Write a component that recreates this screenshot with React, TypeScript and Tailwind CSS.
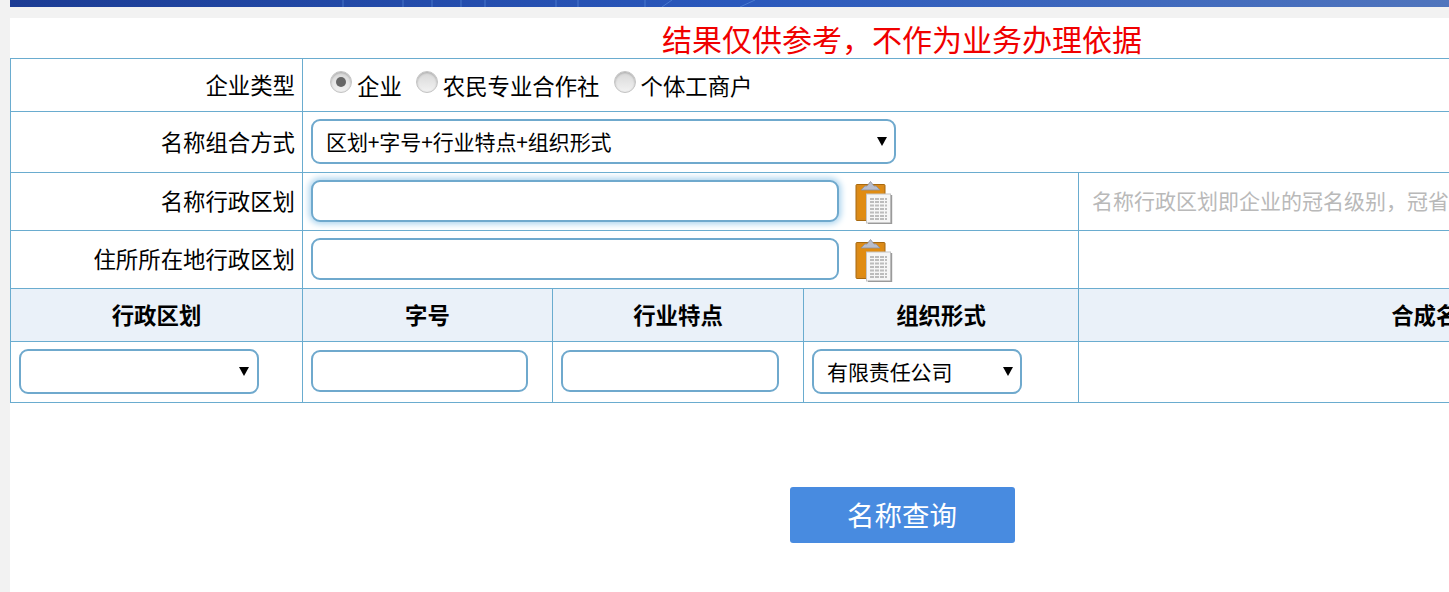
import type { ReactNode } from 'react'

const cellBorder = 'border border-[#6aaccf]'

/** Native select with the arrow drawn on top */
function SelectBox({ value, className, arrowClass }: { value: string; className: string; arrowClass: string }) {
  return (
    <div className={`relative ${className}`}>
      <select
        defaultValue={value}
        className="w-full h-full appearance-none bg-white border-2 border-[#6fa9cd] rounded-[9px] pl-[13px] pt-[2px] text-[21px] tracking-[-0.1px] text-black outline-none"
      >
        <option value={value}>{value}</option>
      </select>
      <svg className={`absolute pointer-events-none ${arrowClass}`} width="10" height="10" viewBox="0 0 10 10">
        <path d="M0 1 H10 L5 10 Z" fill="#000" />
      </svg>
    </div>
  )
}

function TextBox({ className, focused }: { className: string; focused?: boolean }) {
  return (
    <input
      type="text"
      className={`block bg-white border-2 border-[#6fa9cd] rounded-[9px] outline-none ${
        focused ? 'shadow-[0_0_6px_2px_#a9d3ee]' : ''
      } ${className}`}
    />
  )
}

function Radio({ checked, label, className }: { checked?: boolean; label: string; className?: string }) {
  return (
    <span className={`inline-flex items-start ${className ?? ''}`}>
      <span className="w-[22px] h-[22px] rounded-full border border-[#c4c4c4] bg-gradient-to-b from-[#d8d8d8] to-[#f2f2f2] shadow-[inset_0_1px_2px_#aaa] flex items-center justify-center">
        {checked && <span className="w-[10px] h-[10px] rounded-full bg-[#666]" />}
      </span>
      <span className="ml-[5px] leading-[30px] mt-[-1px]">{label}</span>
    </span>
  )
}

function ClipboardIcon() {
  return (
    <svg width="38" height="44" viewBox="0 0 38 44" className="block">
      <rect x="1" y="4.5" width="29" height="36" rx="1" fill="#d98a1c" stroke="#a8690f" />
      <rect x="3.5" y="7" width="24" height="31" fill="#e08c12" />
      <path d="M6 10 L10 6 H12 L15.5 1.5 L19 6 H21 L25 10 Z" fill="#b8bdcc" stroke="#8f8f98" strokeWidth="0.8" />
      <rect x="11.5" y="14" width="24" height="29" fill="#f6f6f6" stroke="#c4c4c4" />
      <path d="M36.5 15 V43.5 H13" fill="none" stroke="#9a9a9a" strokeWidth="1.4" />
      <path
        d="M15 19 H32 M15 22 H32 M15 25.5 H32 M15 29 H32 M15 32.5 H32 M15 36 H32 M15 39 H32"
        stroke="#bcbcbc"
        strokeWidth="1.8"
        strokeDasharray="4 1"
      />
    </svg>
  )
}

function Label({ children, className }: { children: ReactNode; className?: string }) {
  return <td className={`${cellBorder} text-right pr-[7px] ${className ?? 'pb-[1px]'}`}>{children}</td>
}

function HeadCell({ children }: { children: ReactNode }) {
  return <th className={`${cellBorder} pb-[1px] bg-[#eaf1f9] font-bold text-center`}>{children}</th>
}

export default function App() {
  return (
    <div
      className="w-[1449px] h-[592px] overflow-hidden bg-[#f2f2f2] pl-[10px] text-[22.4px] text-black"
      style={{ fontFamily: '"Noto Sans CJK SC", "Liberation Sans", sans-serif' }}
    >
      {/* Banner strip */}
      <div className="relative h-[7px] bg-gradient-to-r from-[#1c3c94] via-[#2a58bc] to-[#5075bd]">
        <svg className="absolute left-0 top-0" width="1439" height="7" viewBox="0 0 1439 7">
          <path
            d="M333 0 V7 M393 0 V7 M422 0 V7 M451 0 V7 M475 0 V7 M546 0 V7 M568 0 V7 M635 0 V7 M652 7 L662 0 M730 7 L745 0"
            stroke="#5f8fdc"
            strokeOpacity="0.6"
            fill="none"
          />
        </svg>
      </div>

      <div className="mt-[11px] h-[574px] bg-white w-[1784px]">
        <div className="h-[40px] text-center text-[30px] leading-[41px] text-[#f00000]">
          结果仅供参考，不作为业务办理依据
        </div>

        <table className="table-fixed border-collapse w-[1784px] bg-white">
          <colgroup>
            <col className="w-[292px]" />
            <col className="w-[250px]" />
            <col className="w-[251px]" />
            <col className="w-[275px]" />
            <col />
          </colgroup>
          <tbody>
            <tr className="h-[53px]">
              <Label className="pb-0">企业类型</Label>
              <td colSpan={4} className={`${cellBorder} pb-[2px] pl-[27px]`}>
                <div className="flex items-center mt-[2px]">
                  <Radio checked label="企业" />
                  <Radio label="农民专业合作社" className="ml-[14px]" />
                  <Radio label="个体工商户" className="ml-[14px]" />
                </div>
              </td>
            </tr>
            <tr className="h-[61px]">
              <Label>名称组合方式</Label>
              <td colSpan={4} className={`${cellBorder} pb-[2px] pl-[8px]`}>
                <SelectBox
                  value="区划+字号+行业特点+组织形式"
                  className="w-[585px] h-[45px]"
                  arrowClass="right-[9px] top-[17px]"
                />
              </td>
            </tr>
            <tr className="h-[58px]">
              <Label>名称行政区划</Label>
              <td colSpan={3} className={`${cellBorder} pb-[2px] pl-[8px]`}>
                <div className="flex items-center">
                  <TextBox focused className="w-[528px] h-[42px]" />
                  <span className="ml-[16px] mt-[3px]">
                    <ClipboardIcon />
                  </span>
                </div>
              </td>
              <td className={`${cellBorder} pb-[1px] pl-[13px] text-[21px] text-[#b9b9b9] whitespace-nowrap overflow-hidden`}>
                名称行政区划即企业的冠名级别，冠省级行政区划
              </td>
            </tr>
            <tr className="h-[58px]">
              <Label>住所所在地行政区划</Label>
              <td colSpan={3} className={`${cellBorder} pb-[2px] pl-[8px]`}>
                <div className="flex items-center">
                  <TextBox className="w-[528px] h-[42px]" />
                  <span className="ml-[16px] mt-[3px]">
                    <ClipboardIcon />
                  </span>
                </div>
              </td>
              <td className={cellBorder} />
            </tr>
            <tr className="h-[53px]">
              <HeadCell>行政区划</HeadCell>
              <HeadCell>字号</HeadCell>
              <HeadCell>行业特点</HeadCell>
              <HeadCell>组织形式</HeadCell>
              <HeadCell>合成名称</HeadCell>
            </tr>
            <tr className="h-[61px]">
              <td className={`${cellBorder} pb-[2px] pl-[8px]`}>
                <SelectBox value="" className="w-[240px] h-[45px]" arrowClass="right-[10px] top-[17px]" />
              </td>
              <td className={`${cellBorder} pb-[2px] pl-[8px]`}>
                <TextBox className="w-[217px] h-[42px]" />
              </td>
              <td className={`${cellBorder} pb-[2px] pl-[8px]`}>
                <TextBox className="w-[218px] h-[42px]" />
              </td>
              <td className={`${cellBorder} pb-[2px] pl-[8px]`}>
                <SelectBox value="有限责任公司" className="w-[210px] h-[45px]" arrowClass="right-[9px] top-[17px]" />
              </td>
              <td className={cellBorder} />
            </tr>
          </tbody>
        </table>

        <div className="mt-[84px] flex justify-center">
          <button className="w-[225px] h-[56px] rounded-[3px] bg-[#488be0] text-white text-[27.5px]">名称查询</button>
        </div>
      </div>
    </div>
  )
}
